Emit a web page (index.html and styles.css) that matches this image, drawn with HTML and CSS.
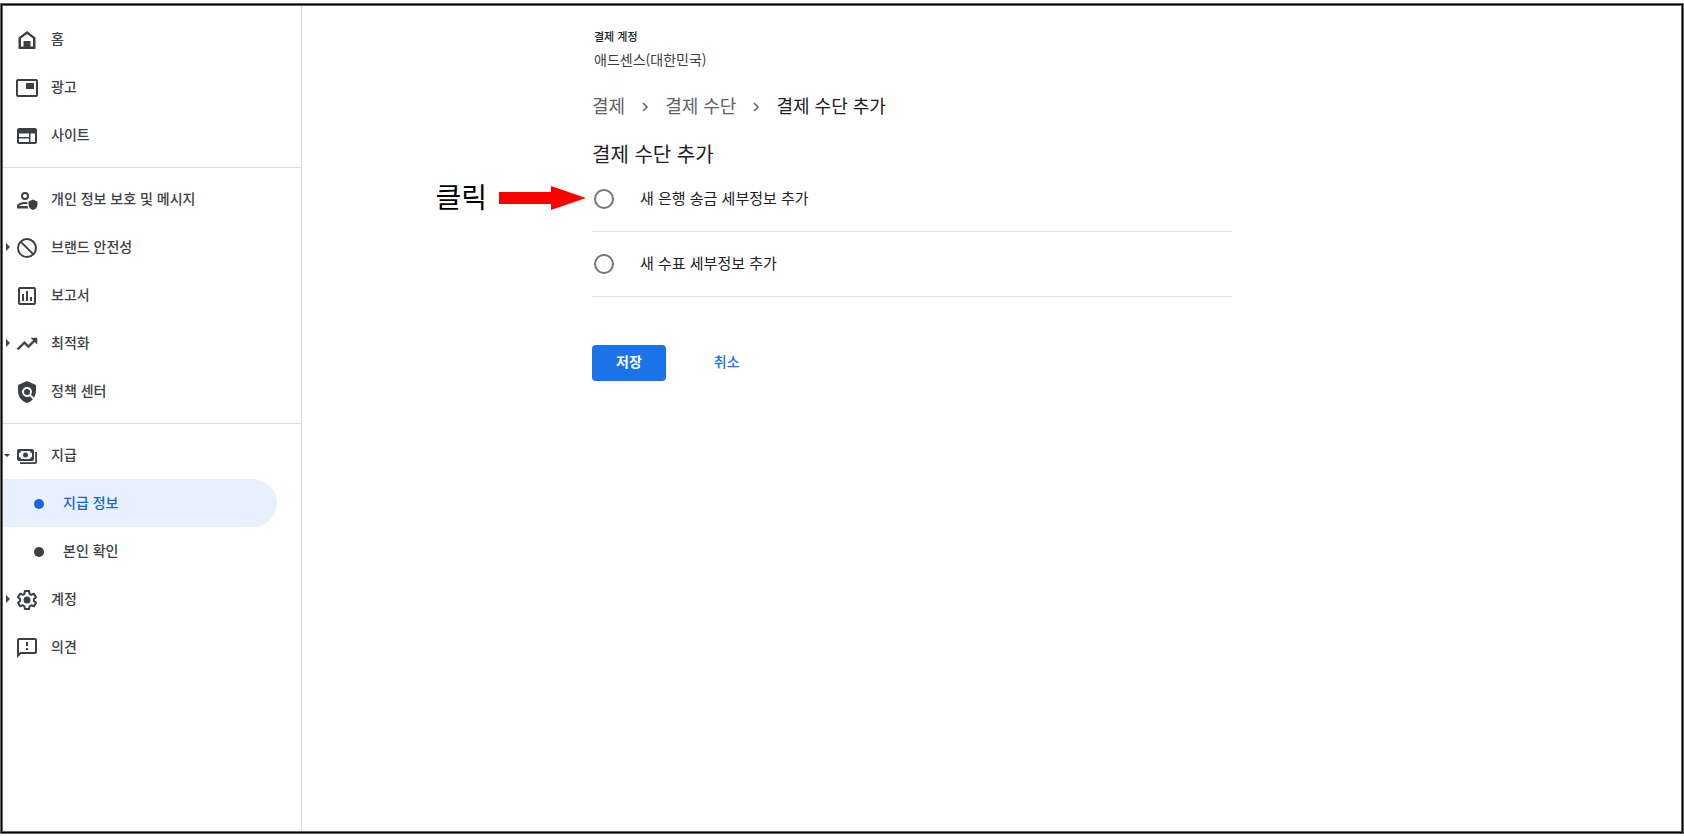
FILE: index.html
```html
<!DOCTYPE html>
<html lang="ko">
<head>
	<meta charset="UTF-8">
	<title>결제 수단 추가</title>
	<link rel="stylesheet" href="styles.css">
</head>
<body>
	<div class="frame">
		<nav class="sidebar">
			<ul class="nav-group">
				<li><a class="nav-item" href="#">
					<svg class="icon" viewBox="0 0 24 24"><path d="M12 3 3.500 9.400V21h17V9.400zM6 18.600v-8.100l6-4.600 6 4.600v8.100h-2.500V13h-7v5.600z" fill-rule="evenodd"/></svg>
					<span>홈</span>
				</a></li>
				<li><a class="nav-item" href="#">
					<svg class="icon" viewBox="0 0 24 24"><path d="M19 7h-8v6h8zM21 3H3c-1.100 0-2 .9-2 2v14c0 1.100.9 2 2 2h18c1.100 0 2-.9 2-2V5c0-1.100-.9-2-2-2zm0 16H3V5h18z" fill-rule="evenodd"/><path d="M11 7h8v6h-8z"/></svg>
					<span>광고</span>
				</a></li>
				<li><a class="nav-item" href="#">
					<svg class="icon" viewBox="0 0 24 24"><path d="M20 4H4c-1.100 0-2 .9-2 2v12c0 1.100.9 2 2 2h16c1.100 0 2-.9 2-2V6c0-1.100-.9-2-2-2zM14 18H4v-3.500h10zm0-5H4V9.500h10zm6 5h-4.500V9.500H20z" fill-rule="evenodd"/></svg>
					<span>사이트</span>
				</a></li>
			</ul>
			<ul class="nav-group">
				<li><a class="nav-item" href="#">
					<svg class="icon" viewBox="0 0 24 24"><path d="M10 12a4 4 0 1 0 0-8 4 4 0 0 0 0 8zm0-6a2 2 0 1 1 0 4 2 2 0 0 1 0-4zM4 18c.2-.7 3.300-2 6-2 .8 0 1.600.1 2.400.3V14.200C11.600 14.100 10.800 14 10 14c-2.700 0-8 1.300-8 4v2.500h11.500c-.5-.7-.8-1.500-1-2.500z" fill-rule="evenodd"/><path d="m18 11.500-4.500 2v3.200c0 2.500 1.900 4.700 4.500 5.300 2.600-.6 4.500-2.800 4.500-5.300v-3.200z"/></svg>
					<span>개인 정보 보호 및 메시지</span>
				</a></li>
				<li><a class="nav-item" href="#">
					<svg class="caret" viewBox="0 0 6 10"><path d="M1 1v8l4-4z"/></svg>
					<svg class="icon" viewBox="0 0 24 24"><path d="M12 2a10 10 0 1 0 0 20 10 10 0 0 0 0-20zM4 12a8 8 0 0 1 1.700-4.900L16.900 18.300A8 8 0 0 1 4 12zm14.300 4.900L7.100 5.700A8 8 0 0 1 18.300 16.900z" fill-rule="evenodd"/></svg>
					<span>브랜드 안전성</span>
				</a></li>
				<li><a class="nav-item" href="#">
					<svg class="icon" viewBox="0 0 24 24"><path d="M19 3H5c-1.100 0-2 .9-2 2v14c0 1.100.9 2 2 2h14c1.100 0 2-.9 2-2V5c0-1.100-.9-2-2-2zm0 16H5V5h14zM7 10h2v7H7zm4-3h2v10h-2zm4 6h2v4h-2z" fill-rule="evenodd"/></svg>
					<span>보고서</span>
				</a></li>
				<li><a class="nav-item" href="#">
					<svg class="caret" viewBox="0 0 6 10"><path d="M1 1v8l4-4z"/></svg>
					<svg class="icon" viewBox="0 0 24 24"><path d="m16 6 2.290 2.290-4.880 4.880-4-4L2 16.590 3.410 18l6-6 4 4 6.300-6.290L22 12V6z" stroke="#3c4043" stroke-width=".5"/></svg>
					<span>최적화</span>
				</a></li>
				<li><a class="nav-item" href="#">
					<svg class="icon" viewBox="0 0 24 24"><path d="M21 5l-9-4-9 4v6c0 5.550 3.840 10.740 9 12 2.300-.56 4.330-1.900 5.880-3.710l-3.120-3.120a5 5 0 1 1 1.410-1.410l2.900 2.900A12.300 12.300 0 0 0 21 11z"/><circle cx="12" cy="12" r="3"/></svg>
					<span>정책 센터</span>
				</a></li>
			</ul>
			<ul class="nav-group">
				<li><a class="nav-item" href="#">
					<svg class="caret caret-down" viewBox="0 0 10 6"><path d="M1 1h8L5 5z"/></svg>
					<svg class="icon" viewBox="0 0 24 24"><path d="M4 5h13a2 2 0 0 1 2 2v8a2 2 0 0 1-2 2H4a2 2 0 0 1-2-2V7a2 2 0 0 1 2-2zm2 2a2 2 0 0 1-2 2v4a2 2 0 0 1 2 2h9a2 2 0 0 1 2-2V9a2 2 0 0 1-2-2z" fill-rule="evenodd"/><circle cx="10.500" cy="11" r="2.500"/><path d="M20.200 8H22v10a2 2 0 0 1-2 2H5v-1.800h15.200z"/></svg>
					<span>지급</span>
				</a></li>
				<li><a class="nav-item nav-sub active" href="#" aria-current="page">
					<i class="dot"></i>
					<span>지급 정보</span>
				</a></li>
				<li><a class="nav-item nav-sub" href="#">
					<i class="dot"></i>
					<span>본인 확인</span>
				</a></li>
				<li><a class="nav-item" href="#">
					<svg class="caret" viewBox="0 0 6 10"><path d="M1 1v8l4-4z"/></svg>
					<svg class="icon" viewBox="0 0 24 24"><path d="M9.900 3h4.200l.5 2.800 1.700 1 2.700-1 2 3.500-2.100 1.800v1.900l2.100 1.800-2 3.500-2.700-1-1.700 1-.5 2.700H9.900l-.5-2.700-1.700-1-2.700 1-2-3.500L5.100 13v-1.900L3 9.300l2-3.500 2.700 1 1.700-1z" fill="none" stroke="#3c4043" stroke-width="2" stroke-linejoin="round"/><circle cx="12" cy="12" r="3.500"/></svg>
					<span>계정</span>
				</a></li>
				<li><a class="nav-item" href="#">
					<svg class="icon" viewBox="0 0 24 24"><path d="M20 2H4c-1.100 0-2 .9-2 2v18l4-4h14c1.100 0 2-.9 2-2V4c0-1.100-.9-2-2-2zm0 14H5.200L4 17.200V4h16zM11 12h2v2h-2zm0-6h2v4h-2z" fill-rule="evenodd"/></svg>
					<span>의견</span>
				</a></li>
			</ul>
		</nav>
		<main class="main">
			<div class="content">
				<div class="account">
					<p class="account-label">결제 계정</p>
					<p class="account-name">애드센스(대한민국)</p>
				</div>
				<nav class="breadcrumb">
					<a href="#">결제</a>
					<svg class="chevron" viewBox="0 0 8 12"><path d="m2 2 4 4-4 4"/></svg>
					<a href="#">결제 수단</a>
					<svg class="chevron" viewBox="0 0 8 12"><path d="m2 2 4 4-4 4"/></svg>
					<span>결제 수단 추가</span>
				</nav>
				<form>
					<h1 class="title">결제 수단 추가</h1>
					<div class="option">
						<input type="radio" name="method" id="bank">
						<label for="bank">새 은행 송금 세부정보 추가</label>
						<div class="hint">
							<span>클릭</span>
							<svg class="arrow" viewBox="0 0 87 24"><path d="M0 6h52V0l35 12-35 12v-6H0z"/></svg>
						</div>
					</div>
					<div class="option">
						<input type="radio" name="method" id="check">
						<label for="check">새 수표 세부정보 추가</label>
					</div>
					<div class="actions">
						<button class="btn btn-primary" type="submit">저장</button>
						<button class="btn" type="button">취소</button>
					</div>
				</form>
			</div>
		</main>
	</div>
</body>
</html>
```

FILE: styles.css
```css
* {
	box-sizing: border-box;
	margin: 0;
	padding: 0;
}
html, body {
	height: 100%;
}
body {
	padding: 3px 0 2px;
	background: #fff;
	color: #202124;
	font-family: "Noto Sans CJK KR", sans-serif;
	font-size: 14px;
	line-height: 20px;
}
a {
	color: inherit;
	text-decoration: none;
}
ul {
	list-style: none;
}
.frame {
	display: flex;
	min-height: 100%;
	padding: 2px;
	border: 1px solid #666;
	box-shadow: inset 0 0 0 1px #000, inset 0 0 0 2px #666;
}

/* sidebar */
.sidebar {
	flex: none;
	width: 299px;
	padding-top: 1px;
	border-right: 1px solid #dadce0;
}
.nav-group {
	padding: 8px 0;
}
.nav-group + .nav-group {
	padding-top: 7px;
	border-top: 1px solid #dadce0;
}
.nav-item {
	position: relative;
	display: flex;
	align-items: center;
	gap: 12px;
	height: 48px;
	padding-left: 12px;
	color: #3c4043;
	font-weight: 500;
}
.nav-item span {
	padding-bottom: 2px;
}
.icon {
	width: 24px;
	height: 24px;
	margin-top: 2px;
	fill: #3c4043;
}
.caret {
	position: absolute;
	left: 2px;
	top: 19px;
	width: 6px;
	height: 10px;
	fill: #3c4043;
}
.caret-down {
	left: 0;
	top: 22px;
	width: 8px;
	height: 5px;
}
.nav-sub {
	gap: 19px;
	margin-right: 24px;
	padding-left: 31px;
	border-radius: 0 24px 24px 0;
}
.dot {
	width: 10px;
	height: 10px;
	margin-top: 2px;
	border-radius: 50%;
	background: #3c4043;
}
.active {
	background: #e8f0fe;
	color: #1967d2;
}
.active .dot {
	background: #1967d2;
}

/* main */
.main {
	flex: 1;
	padding: 20px 24px 24px 290px;
}
.content {
	max-width: 640px;
}
.account {
	padding-left: 2px;
}
.account-label {
	font-size: 11px;
	font-weight: 500;
}
.account-name {
	margin-top: 3px;
	color: #3c4043;
}
.breadcrumb {
	display: flex;
	align-items: center;
	gap: 16px;
	margin-top: 24px;
	color: #5f6368;
	font-size: 18px;
	line-height: 24px;
}
.breadcrumb span {
	color: #202124;
}
.chevron {
	width: 8px;
	height: 12px;
	margin-top: 3px;
	fill: none;
	stroke: #5f6368;
	stroke-width: 1.5;
}
.title {
	margin-top: 24px;
	font-size: 20px;
	font-weight: 400;
	line-height: 26px;
}
.option {
	position: relative;
	display: flex;
	align-items: center;
	gap: 26px;
	height: 65px;
	padding-left: 2px;
	border-bottom: 1px solid #e0e0e0;
}
.option input {
	appearance: none;
	width: 20px;
	height: 20px;
	border: 2px solid #757575;
	border-radius: 50%;
}
.option input:checked {
	background: radial-gradient(#1a73e8 5px, #fff 6px);
	border-color: #1a73e8;
}
.option label {
	padding-bottom: 2px;
	font-size: 15px;
}
.hint {
	position: absolute;
	right: 100%;
	top: 14px;
	display: flex;
	align-items: center;
	gap: 12px;
	margin-right: 6px;
	color: #000;
	font-size: 28px;
	line-height: 30px;
	white-space: nowrap;
}
.hint span {
	padding-bottom: 4px;
}
.arrow {
	width: 87px;
	height: 24px;
	fill: #f00;
}
.actions {
	display: flex;
	gap: 24px;
	margin-top: 48px;
}
.btn {
	height: 36px;
	padding: 0 24px 4px;
	border: 0;
	border-radius: 4px;
	background: none;
	color: #1a73e8;
	font: inherit;
	font-weight: 500;
}
.btn-primary {
	background: #1a73e8;
	color: #fff;
	font-weight: 700;
}
```
